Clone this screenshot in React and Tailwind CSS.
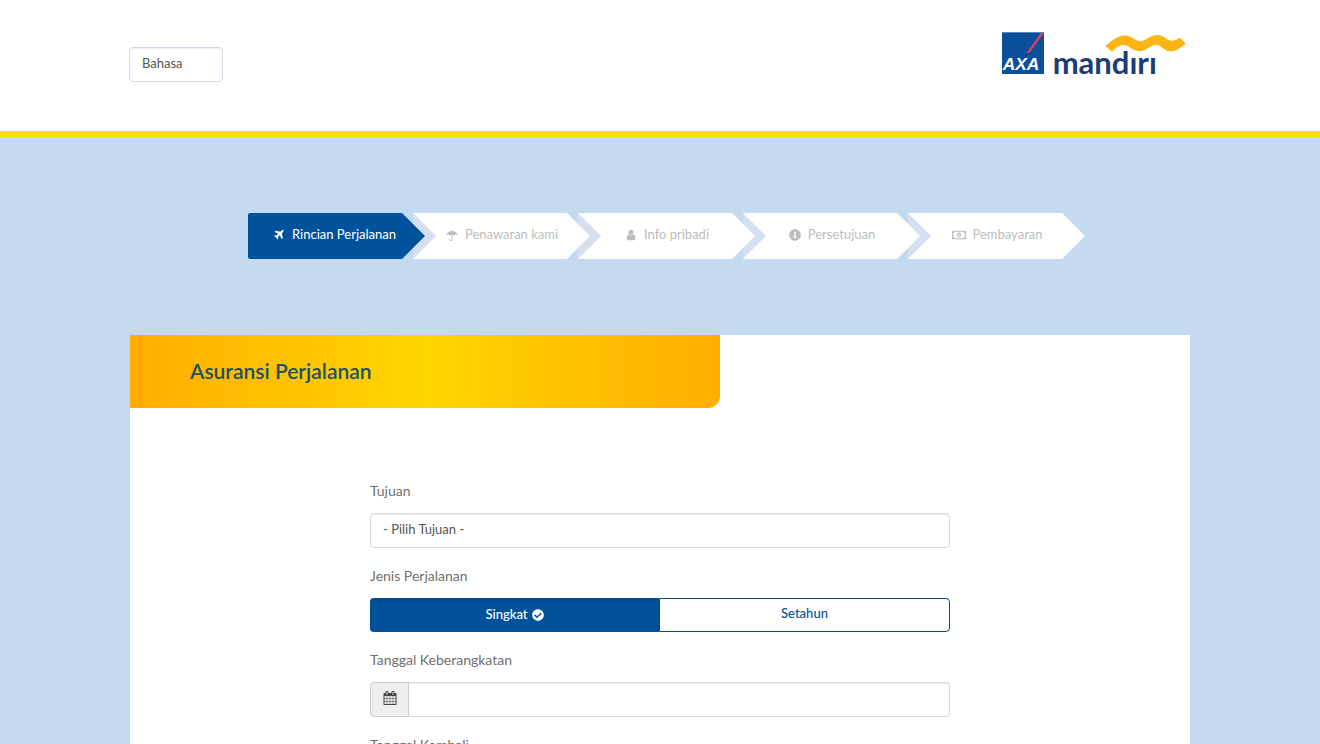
import { FaCheckCircle, FaInfoCircle, FaRegMoneyBillAlt } from 'react-icons/fa';

const PlaneIcon = ({ className }) => (
    <svg className={className} viewBox="0 0 1792 1792" fill="currentColor" aria-hidden="true">
        <path d="M1568 160q44 52 12 148t-108 172l-161 161 160 696q5 19-12 33l-128 96q-7 6-19 6-4 0-7-1-15-3-21-16l-279-508-259 259 53 194q5 17-8 31l-96 96q-9 9-23 9h-2q-15-2-24-13l-189-252-252-189q-11-7-13-23-1-13 9-25l96-97q9-9 23-9 6 0 8 1l194 53 259-259-508-279q-14-8-17-24-2-16 9-27l128-128q14-13 30-8l665 159 160-160q76-76 172-108t148 12z" />
    </svg>
);

const UmbrellaIcon = ({ className }) => (
    <svg className={className} viewBox="0 0 1664 1792" fill="currentColor" aria-hidden="true">
        <path d="M896 836v716q0 104-76 180t-180 76-180-76-76-180q0-26 19-45t45-19 45 19 19 45q0 50 39 89t89 39 89-39 39-89v-716q33-11 64-11t64 11zM1664 889q0 13-9.500 22.500t-22.500 9.500q-11 0-23-10-49-46-93-69t-102-23q-68 0-128 37t-103 97q-7 10-17.500 28t-14.500 24q-11 17-28 17-18 0-29-17-4-6-14.500-24t-17.500-28q-43-60-102.500-97t-127.500-37-127.500 37-102.500 97q-7 10-17.500 28t-14.500 24q-11 17-29 17-17 0-28-17-4-6-14.500-24t-17.500-28q-43-60-103-97t-128-37q-58 0-102 23t-93 69q-12 10-23 10-13 0-22.500-9.500t-9.500-22.500q0-5 1-7 45-183 172.500-319.500t298-204.500 360.500-68q140 0 274.500 40t246.500 113.500 194.500 187 115.500 251.500q1 2 1 7zM896 130v98q-42-2-64-2t-64 2v-98q0-26 19-45t45-19 45 19 19 45z" />
    </svg>
);

const UserIcon = ({ className }) => (
    <svg className={className} viewBox="0 0 1792 1792" fill="currentColor" aria-hidden="true">
        <path d="M1536 1399q0 109-62.500 187t-150.500 78h-854q-88 0-150.500-78t-62.500-187q0-85 8.500-160.500t31.500-152 58.500-131 94-89 134.500-34.500q131 128 313 128t313-128q76 0 134.500 34.500t94 89 58.500 131 31.500 152 8.500 160.500zM1280 512q0 159-112.500 271.500t-271.500 112.500-271.500-112.500-112.500-271.500 112.500-271.500 271.500-112.500 271.500 112.500 112.500 271.500z" />
    </svg>
);

const CalendarIcon = ({ className }) => (
    <svg className={className} viewBox="0 0 1792 1792" fill="currentColor" aria-hidden="true">
        <path d="M192 1664h288v-288h-288v288zM544 1664h320v-288h-320v288zM192 1312h288v-320h-288v320zM544 1312h320v-320h-320v320zM192 928h288v-288h-288v288zM928 1664h320v-288h-320v288zM544 928h320v-288h-320v288zM1312 1664h288v-288h-288v288zM928 1312h320v-320h-320v320zM576 448v-288q0-13-9.500-22.500t-22.500-9.500h-64q-13 0-22.500 9.500t-9.500 22.500v288q0 13 9.500 22.500t22.500 9.500h64q13 0 22.500-9.500t9.500-22.500zM1312 1312h288v-320h-288v320zM928 928h320v-288h-320v288zM1312 928h288v-288h-288v288zM1344 448v-288q0-13-9.500-22.500t-22.500-9.500h-64q-13 0-22.500 9.500t-9.500 22.500v288q0 13 9.500 22.500t22.500 9.500h64q13 0 22.500-9.500t9.500-22.500zM1728 384v1280q0 52-38 90t-90 38h-1408q-52 0-90-38t-38-90v-1280q0-52 38-90t90-38h128v-96q0-66 47-113t113-47h64q66 0 113 47t47 113v96h384v-96q0-66 47-113t113-47h64q66 0 113 47t47 113v96h128q52 0 90 38t38 90z" />
    </svg>
);

const Logo = () => (
    <svg className="h-12 w-46" viewBox="0 0 552 144" role="img" aria-label="AXA Mandiri">
        <rect x="0" y="7" width="126" height="125" fill="#0a4f9b" />
        <path d="M74 69 117 8h9L82 69z" fill="#d8455f" />
        <text x="2" y="120" fontFamily="'Liberation Sans', sans-serif" fontSize="52" fontStyle="italic" fontWeight="700" fill="#fff">AXA</text>
        <text x="152" y="131" fontFamily="Lato, sans-serif" fontSize="93" fontWeight="700" fill="#1d3c73">mandırı</text>
        <path d="M310 48C332 30 348 17 370 16C392 18 402 36 418 34C436 28 446 14 468 15C490 18 498 34 510 32C522 30 528 26 534 23L552 41C536 52 524 64 504 64C484 62 478 44 462 44C442 48 430 64 410 64C388 62 382 45 364 45C350 46 342 54 330 65z" fill="#fdb515" />
    </svg>
);

const steps = [
    { label: 'Rincian Perjalanan', icon: PlaneIcon, active: true },
    { label: 'Penawaran kami', icon: UmbrellaIcon },
    { label: 'Info pribadi', icon: UserIcon },
    { label: 'Persetujuan', icon: FaInfoCircle },
    { label: 'Pembayaran', icon: FaRegMoneyBillAlt, iconSize: 'size-[14px]' },
];

const Steps = () => (
    <ol className="flex gap-[11px] pl-[118px] pr-32">
        {steps.map(({ label, icon: Icon, iconSize = 'size-3', active }, i) => (
            <li key={label} className={`relative flex-1 ${active ? 'rounded-l-xs bg-[#00529b] text-white' : 'bg-white text-[#bdbdbd]'}`}>
                {i > 0 && (
                    <span className="absolute inset-y-0 left-0 w-[23px] bg-[#d6dfef] [clip-path:polygon(0_0,100%_50%,0_100%)]" />
                )}
                <a href="#" className={`relative flex h-[46px] items-center gap-[7px] pb-[3px] whitespace-nowrap ${active ? 'justify-end pr-[6px]' : 'justify-center pl-6'}`}>
                    <Icon className={`shrink-0 ${iconSize}`} />
                    {label}
                </a>
                <span className={`absolute inset-y-0 left-full z-10 w-[23px] [clip-path:polygon(0_0,100%_50%,0_100%)] ${active ? 'bg-[#00529b]' : 'bg-white'}`} />
            </li>
        ))}
    </ol>
);

const DateField = ({ id, label }) => (
    <div>
        <label htmlFor={id} className="mb-[13px] block text-sm leading-[19px]">{label}</label>
        <div className="flex h-[35px]">
            <span className="flex w-[39px] items-center justify-center rounded-l border border-[#ccc] bg-[#eee] pb-[3px] text-[#444]">
                <CalendarIcon className="size-[14px]" />
            </span>
            <input id={id} type="text" className="min-w-0 flex-1 rounded-r border border-l-0 border-[#d6dce6] px-3 shadow-[inset_0_1px_1px_rgba(0,0,0,0.075)]" />
        </div>
    </div>
);

const App = () => (
    <div className="h-screen overflow-hidden bg-[#c4daf0] font-[Lato,sans-serif] text-[13px] text-[#6f6f6f]">
        <header className="border-b-6 border-[#f8dc0c] bg-white">
            <div className="mx-auto flex h-[131px] max-w-[1062px] items-start justify-between">
                <select aria-label="Bahasa" className="mt-[47px] h-[35px] w-[94px] appearance-none rounded border border-[#d6dae8] bg-white px-3 pb-[2px] text-[#555] shadow-[inset_0_1px_1px_rgba(0,0,0,0.075)]">
                    <option>Bahasa</option>
                </select>
                <a href="#" className="mt-[30px] mr-[5px]"><Logo /></a>
            </div>
        </header>
        <main className="mx-auto max-w-[1060px] pt-[76px]">
            <Steps />
            <section className="mt-[76px] bg-white pb-20">
                <div className="max-w-[590px] rounded-br-xl bg-linear-to-r from-[#ffad00] via-[#ffd500] to-[#ffad00] px-15 pt-[19px] pb-[21px]">
                    <h1 className="text-[21px] leading-[33px] font-semibold text-[#1c5264]">Asuransi Perjalanan</h1>
                </div>
                <form className="mx-auto mt-[73px] max-w-[580px] space-y-[18px]">
                    <div>
                        <label htmlFor="tujuan" className="mb-[13px] block text-sm leading-[19px]">Tujuan</label>
                        <select id="tujuan" className="h-[35px] w-full appearance-none rounded border border-[#d6dce6] bg-white px-3 pb-[2px] text-[#555] shadow-[inset_0_1px_1px_rgba(0,0,0,0.075)]">
                            <option>- Pilih Tujuan -</option>
                        </select>
                    </div>
                    <div role="group" aria-labelledby="jenis">
                        <p id="jenis" className="mb-[13px] text-sm leading-[19px]">Jenis Perjalanan</p>
                        <div className="flex h-[34px] font-medium">
                            <button type="button" className="flex flex-1 items-center justify-center gap-1 rounded-l bg-[#00529b] text-white shadow-[inset_0_3px_5px_rgba(0,0,0,0.125)]">
                                Singkat <FaCheckCircle className="size-3" />
                            </button>
                            <button type="button" className="flex-1 rounded-r border border-[#0b4f80] pb-[2px] text-[#00529b]">Setahun</button>
                        </div>
                    </div>
                    <DateField id="berangkat" label="Tanggal Keberangkatan" />
                    <DateField id="kembali" label="Tanggal Kembali" />
                </form>
            </section>
        </main>
    </div>
);

export default App;
